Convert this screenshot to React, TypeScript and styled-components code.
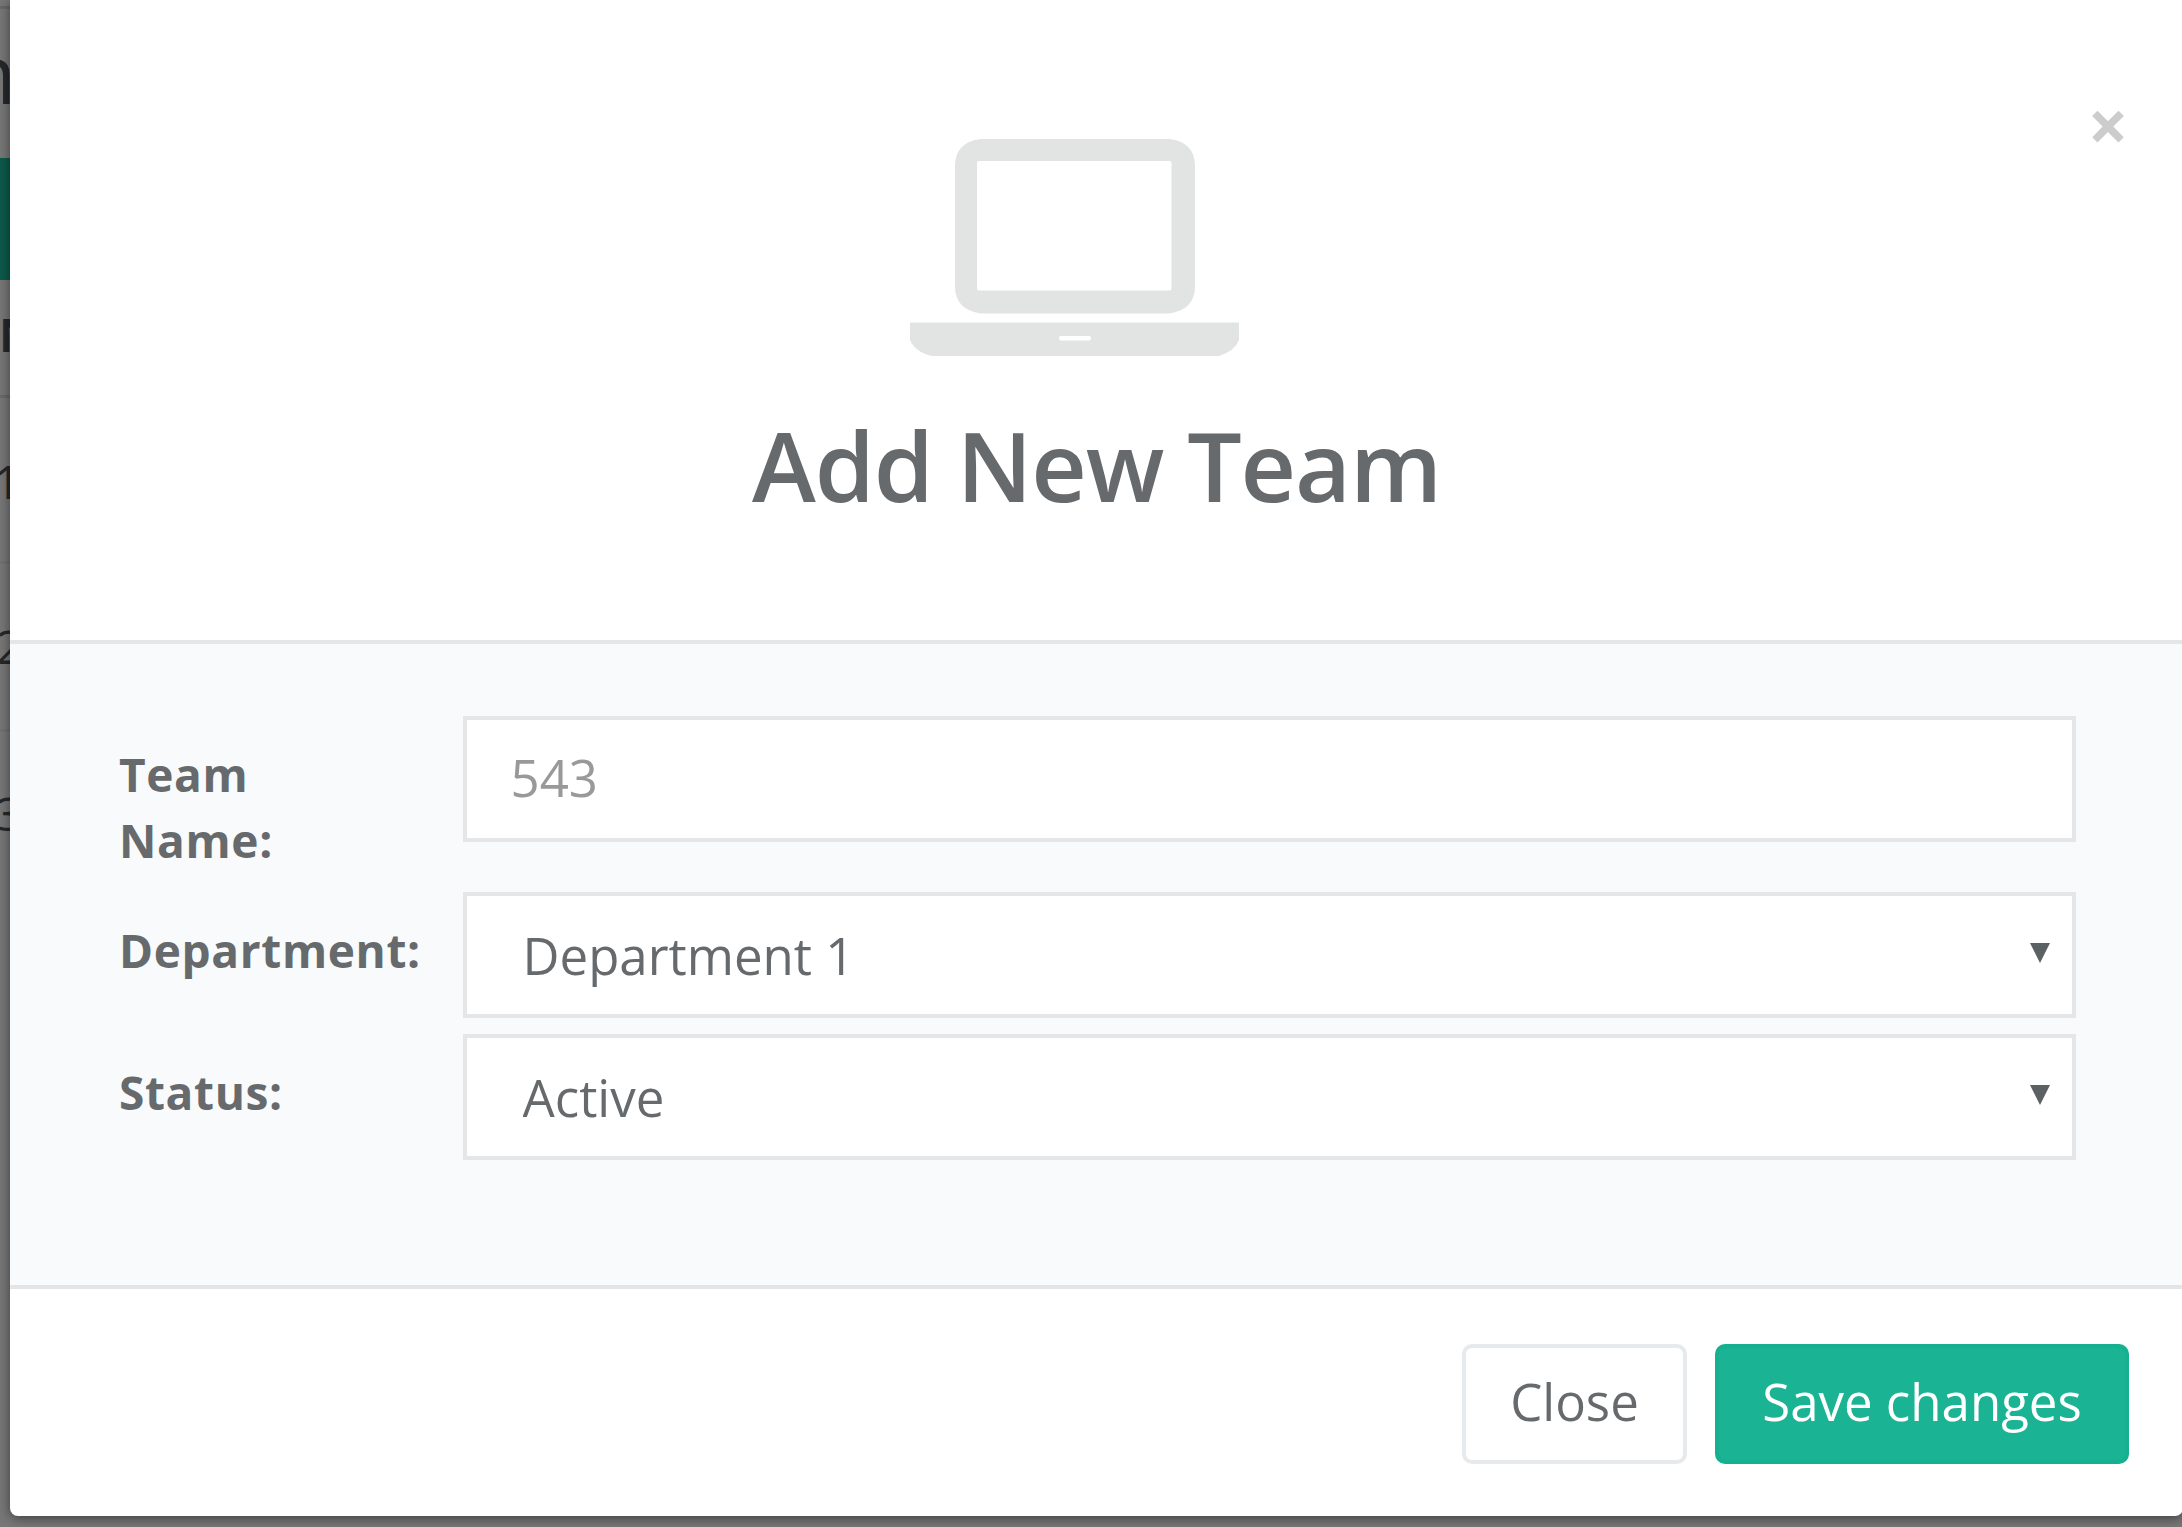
import React from "react";
import styled, { createGlobalStyle } from "styled-components";

const GlobalStyle = createGlobalStyle`
  *, *::before, *::after { box-sizing: border-box; }
  body {
    margin: 0;
    overflow: hidden;
    background: #777;
    color: #676a6c;
    font-family: "Open Sans", "Liberation Sans", sans-serif;
  }
`;

const Page = styled.div`
  display: grid;
  grid-template-columns: 10px 2173px;
  width: 2182px;
  height: 1527px;
  overflow: hidden;
  background: #777777;
`;

const Behind = styled.div`
  display: flex;
  flex-direction: column;
  height: 1527px;
  overflow: hidden;
`;

const BehindRow = styled.div<{
  $height: number;
  $size?: number;
  $weight?: number;
  $shift?: number;
  $lead?: number;
  $fill?: string;
  $line?: string;
}>`
  flex: none;
  height: ${(p) => p.$height}px;
  line-height: ${(p) => p.$lead ?? p.$height}px;
  font-size: ${(p) => p.$size ?? 46}px;
  font-weight: ${(p) => p.$weight ?? 400};
  text-indent: ${(p) => p.$shift ?? 0}px;
  color: #24282c;
  white-space: nowrap;
  background: ${(p) => p.$fill ?? "transparent"};
  box-shadow: inset 0 -3px 0 ${(p) => p.$line ?? "transparent"};
`;

const Modal = styled.section`
  z-index: 1;
  display: flex;
  flex-direction: column;
  height: 1516px;
  background: #fff;
  border-radius: 0 0 8px 8px;
  box-shadow: 0 2px 12px rgba(0, 0, 0, 0.5);
`;

const Header = styled.header`
  display: grid;
  grid-template-columns: 200px 1fr 200px;
  height: 644px;
  border-bottom: 4px solid #e5e7e7;
`;

const Heading = styled.div`
  grid-column: 2;
  display: flex;
  flex-direction: column;
  align-items: center;
  padding-top: 139px;
`;

const LaptopIcon = styled.svg`
  display: block;
  width: 329px;
  height: 217px;
  margin-right: 44px;
  fill: #e2e4e3;
`;

const Title = styled.h4`
  margin: 43px 0 0;
  font-size: 96.5px;
  font-weight: 600;
  line-height: 132px;
  letter-spacing: -1.1px;
  white-space: nowrap;
`;

const Dismiss = styled.button`
  justify-self: end;
  align-self: start;
  width: 60px;
  height: 60px;
  margin: 95px 45px 0 0;
  padding: 0;
  border: 0;
  background: none;
  color: #cccccc;
  font: 700 71px/60px "Open Sans", sans-serif;
`;

const Body = styled.form`
  flex: none;
  height: 641px;
  padding: 72px 107px 0 109px;
  background: #f8fafb;
`;

const Field = styled.div<{ $height: number }>`
  display: grid;
  grid-template-columns: 343.5px 1fr;
  align-items: start;
  height: ${(p) => p.$height}px;
`;

const Label = styled.label`
  width: 220px;
  padding-top: 24.5px;
  font-size: 46px;
  font-weight: 700;
  line-height: 66px;
  letter-spacing: 0.65px;
`;

const TextInput = styled.input`
  width: 100%;
  height: 126px;
  padding: 0 44px 5px;
  border: 4px solid #e5e6e7;
  border-radius: 0;
  outline: 0;
  background: #fff;
  color: #999;
  font: 400 51px "Open Sans", sans-serif;
`;

const SelectBox = styled.div`
  position: relative;
  height: 126px;

  &::after {
    content: "";
    position: absolute;
    top: 51px;
    right: 26px;
    border: solid transparent;
    border-width: 20px 10.5px 0;
    border-top-color: #5c6163;
    pointer-events: none;
  }
`;

const Select = styled.select`
  appearance: none;
  display: block;
  width: 100%;
  height: 126px;
  padding: 0 56px;
  border: 4px solid #e5e6e7;
  border-radius: 0;
  outline: 0;
  background: #fff;
  color: #676a6c;
  font: 400 51px "Open Sans", sans-serif;
`;

const Footer = styled.footer`
  display: flex;
  justify-content: flex-end;
  gap: 28px;
  flex: 1;
  padding: 55px 54px 0 0;
  border-top: 4px solid #e3e5e7;
`;

const Button = styled.button<{ $primary?: boolean; $width: number }>`
  width: ${(p) => p.$width}px;
  height: 120px;
  padding: 0 0 6px;
  border: 4px solid ${(p) => (p.$primary ? "#14b08f" : "#e7eaec")};
  border-radius: 10px;
  background: ${(p) => (p.$primary ? "#1ab394" : "#fff")};
  color: ${(p) => (p.$primary ? "#fff" : "#676a6c")};
  font: 400 51px "Open Sans", sans-serif;
`;

export default function App() {
  return (
    <Page>
      <GlobalStyle />
      <Behind aria-hidden="true">
        <BehindRow $height={9} $line="#686868" />
        <BehindRow $height={149} $size={82} $lead={126} $shift={-34}>
          n
        </BehindRow>
        <BehindRow $height={122} $fill="#0c5a4a" />
        <BehindRow $height={118} $weight={700} $lead={108} $shift={-1} $line="#6a6a6a">
          N
        </BehindRow>
        <BehindRow $height={166} $shift={-6} $line="#717171">
          1
        </BehindRow>
        <BehindRow $height={168} $lead={164} $shift={-4} $line="#717171">
          2
        </BehindRow>
        <BehindRow $height={162} $shift={-4}>
          3
        </BehindRow>
      </Behind>
      <Modal role="dialog" aria-labelledby="team-title">
        <Header>
          <Heading>
            <LaptopIcon viewBox="0 0 329 217" aria-hidden="true">
              <path
                fillRule="evenodd"
                d="M71 0H259Q285 3 285 27V147Q285 171 259 174.500H71Q45 171 45 147V27Q45 3 71 0ZM69 22Q67 22 67 24V149Q67 151.500 69 151.500H259Q261.500 151.500 261.500 149V24Q261.500 22 259 22Z"
              />
              <path
                fillRule="evenodd"
                d="M0 183.500H329V201Q325 212 309 217H22Q5 213 0 201ZM151 197Q149 197 149 199.250Q149 201.500 151 201.500H179Q181 201.500 181 199.250Q181 197 179 197Z"
              />
            </LaptopIcon>
            <Title id="team-title">Add New Team</Title>
          </Heading>
          <Dismiss type="button" aria-label="Close dialog">
            ×
          </Dismiss>
        </Header>
        <Body>
          <Field $height={176}>
            <Label htmlFor="team">Team Name:</Label>
            <TextInput id="team" defaultValue="543" />
          </Field>
          <Field $height={142}>
            <Label htmlFor="department">Department:</Label>
            <SelectBox>
              <Select id="department">
                <option>Department 1</option>
              </Select>
            </SelectBox>
          </Field>
          <Field $height={126}>
            <Label htmlFor="status">Status:</Label>
            <SelectBox>
              <Select id="status">
                <option>Active</option>
              </Select>
            </SelectBox>
          </Field>
        </Body>
        <Footer>
          <Button type="button" $width={225}>
            Close
          </Button>
          <Button type="button" $primary $width={414}>
            Save changes
          </Button>
        </Footer>
      </Modal>
    </Page>
  );
}
